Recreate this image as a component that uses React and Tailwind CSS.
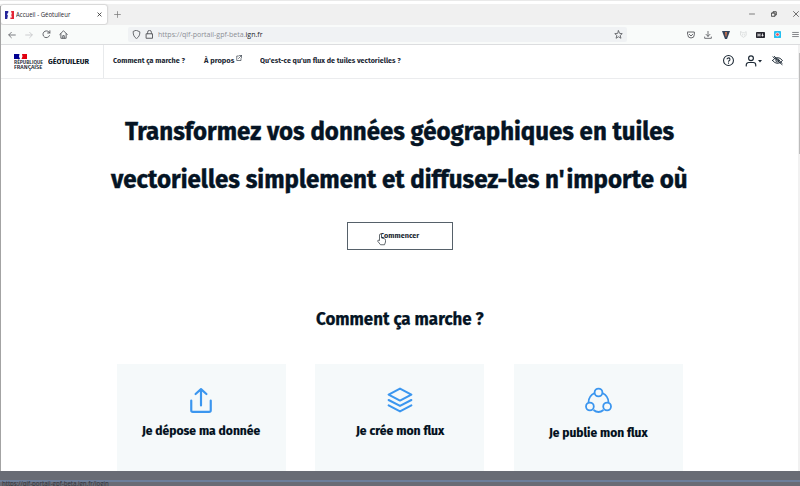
import { useLayoutEffect, useRef, useState } from 'react';

const FIRA = "font-['Fira_Sans','Noto_Sans',sans-serif]";

// Stretches one line of text to the width of its box.
function Fit({ className = '', children }) {
  const box = useRef(null);
  const text = useRef(null);
  const [scale, setScale] = useState(1);
  useLayoutEffect(() => {
    setScale(box.current.clientWidth / text.current.offsetWidth);
  }, []);
  return (
    <span ref={box} className={`block shrink-0 whitespace-nowrap ${className}`}>
      <span ref={text} className="inline-block origin-left" style={{ transform: `scaleX(${scale})` }}>
        {children}
      </span>
    </span>
  );
}

function Icon({ className = '', children, w = 2 }) {
  return (
    <svg
      viewBox="0 0 24 24"
      fill="none"
      stroke="currentColor"
      strokeWidth={w}
      strokeLinecap="round"
      strokeLinejoin="round"
      className={`block shrink-0 ${className}`}
    >
      {children}
    </svg>
  );
}

function TabStrip() {
  return (
    <div className="flex h-[21px] shrink-0 items-start bg-[#f0f0f0]">
      <div className="ml-px mt-px flex h-[19px] w-[106px] items-center rounded-xs bg-white pl-[4px] shadow-[0_0_2px_#9a9a9a]">
        <svg viewBox="0 0 9 8" className="block h-[8px] w-[9px]">
          <path d="M0 0h3.300v1.600L2 3.200l.9 1.400L2.200 8H0z" fill="#26269a" />
          <path d="M6 0h3v8H5.400V6.400H7L6.200 4l.6-1.200z" fill="#e32636" />
        </svg>
        <Fit className="ml-[2px] w-[54px] text-[7px] leading-[10px] text-[#25252b]">Accueil - Géotuileur</Fit>
        <Icon w={4} className="ml-[27px] size-[5px] text-[#333]">
          <path d="M4 4l16 16M20 4L4 20" />
        </Icon>
      </div>
      <Icon w={2.5} className="ml-[7px] mt-[7px] size-[7px] text-[#777]">
        <path d="M12 2v20M2 12h20" />
      </Icon>
      <Icon w={3} className="ml-auto mt-[7px] size-[6px] text-[#555]">
        <path d="M2 12h20" />
      </Icon>
      <Icon w={3.5} className="ml-[16px] mt-[7px] size-[6px] text-[#333]">
        <path d="M3 8h13v13H3zM8 8V3h13v13h-5" />
      </Icon>
      <Icon w={3} className="ml-[16px] mt-[7px] mr-[1px] size-[6px] text-[#444]">
        <path d="M2 2l20 20M22 2L2 22" />
      </Icon>
    </div>
  );
}

function Toolbar() {
  return (
    <div className="flex h-[19px] shrink-0 items-center bg-[#f9fbfa] text-[#5b5d62]">
      <Icon className="ml-[8px] size-[8px]" w={2.4}>
        <path d="M22 12H3M10 4l-8 8 8 8" />
      </Icon>
      <Icon className="ml-[9px] size-[8px] text-[#c2c3c5]" w={2.4}>
        <path d="M2 12h19M14 4l8 8-8 8" />
      </Icon>
      <Icon className="ml-[9px] size-[9px]" w={2.5}>
        <path d="M20 15a9 9 0 1 1-1.500-9.500L21 8M21 2v6h-6" />
      </Icon>
      <Icon className="ml-[8px] size-[9px]" w={2.5}>
        <path d="M2 12L12 2l10 10M5 10v12h14V10M10 22v-7h4v7" />
      </Icon>
      <div className="ml-[60px] flex h-[15px] w-[499px] items-center rounded-xs bg-[#f0f2f4]">
        <Icon className="ml-[4px] size-[9px]" w={2.4}>
          <path d="M12 1l9 4c0 9-3 14-9 18C6 19 3 14 3 5z" />
        </Icon>
        <Icon className="ml-[4px] size-[9px]" w={2.6}>
          <path d="M4 10h16v12H4zM7 10V6a5 5 0 0 1 10 0v4" />
        </Icon>
        <Fit className="ml-[4px] w-[105px] text-[7.500px] leading-[11px] text-[#8c8f94]">
          https://qlf-portail-gpf-beta.<span className="text-[#202028]">ign.fr</span>
        </Fit>
        <Icon className="ml-auto mr-[4px] size-[9px]" w={2.3}>
          <path d="M12 2l3 7 7 .7-5.500 4.800L18.500 22 12 18l-6.500 4 2-7.500L2 9.700 9 9z" />
        </Icon>
      </div>
      <Icon className="ml-[60px] size-[8px]" w={2.8}>
        <path d="M2 3h20v8a10 10 0 0 1-20 0zM7 10l5 5 5-5" />
      </Icon>
      <Icon className="ml-[9px] size-[8px]" w={2.6}>
        <path d="M12 1v15M6 10l6 6 6-6M2 18v4h20v-4" />
      </Icon>
      <svg viewBox="0 0 8 8" className="ml-[10px] block size-[8px]">
        <path d="M0 0h8L5 8H3z" fill="#35445b" />
        <path d="M3 1h2L4.500 5.500h-1z" fill="#d0754c" />
      </svg>
      <Icon className="ml-[10px] size-[7px] text-[#d9dbdc]" w={3}>
        <path d="M3 2l5 4h8l5-4v13l-9 7-9-7zM9 12v2M15 12v2" />
      </Icon>
      <svg viewBox="0 0 9 6" className="ml-[9px] block h-[6px] w-[9px]">
        <rect width="9" height="6" rx=".8" fill="#26262e" />
        <path d="M2 1.500v3M4 1.500v3M2 3h2M6.500 1.500v3M5.500 3.400h2" stroke="#fff" strokeWidth=".8" />
      </svg>
      <svg viewBox="0 0 8 8" className="ml-[9px] block size-[7px]">
        <rect width="8" height="8" rx="1" fill="#23bff0" />
        <circle cx="4" cy="4" r="2.400" fill="#f5f0f2" />
        <circle cx="4" cy="4" r="1.500" fill="#e9474e" />
      </svg>
      <Icon className="ml-[11px] size-[7px]" w={2.5}>
        <path d="M2 5h20M2 12h20M2 19h20" />
      </Icon>
    </div>
  );
}

function SiteHeader() {
  return (
    <header className={`flex h-[34px] shrink-0 border-b border-[#ebecee] bg-white font-bold text-[#1b2733] ${FIRA}`}>
      <div className="flex w-[104px] shrink-0 border-r border-[#e8eaec] pl-[14px]">
        <div className="mt-[9px] w-[30px]">
          <svg viewBox="0 0 13 5" className="block h-[5px] w-[13px]">
            <path d="M0 0h5.500L5 2.500 6 5H0z" fill="#000091" />
            <path d="M8 0h5v5H7.500L8.500 2.500z" fill="#e1000f" />
          </svg>
          <Fit className="mt-px w-[29px] text-[6px] font-medium leading-[5px]">RÉPUBLIQUE</Fit>
          <Fit className="w-[28px] text-[6px] font-medium leading-[5px]">FRANÇAISE</Fit>
        </div>
        <Fit className="ml-[4px] mt-[11px] w-[41px] text-[7.500px] leading-[11px] text-[#08121d]">GÉOTUILEUR</Fit>
      </div>
      <nav className="mt-[10px] flex flex-1 items-start text-[7.250px] leading-[11px]">
        <Fit className="ml-[9px] w-[72px]">Comment ça marche ?</Fit>
        <Fit className="ml-[19px] w-[30px]">À propos</Fit>
        <Icon className="ml-[2px] size-[6px]" w={2.400}>
          <path d="M10 4H3v18h17v-8M14 2h8v8M22 2L10 14" />
        </Icon>
        <Fit className="ml-[18px] w-[141px]">Qu'est-ce qu'un flux de tuiles vectorielles ?</Fit>
      </nav>
      <div className="mr-[17px] mt-[10px] flex">
        <svg viewBox="0 0 24 24" fill="none" stroke="currentColor" strokeWidth="2.300" className="block size-[11px]">
          <circle cx="12" cy="12" r="10.800" />
          <path d="M8.800 9.500a3.200 3.200 0 1 1 4.600 2.900c-1 .5-1.400 1-1.400 2.200M12 16.500v2.400" />
        </svg>
        <Icon className="ml-[11px] size-[12px]" w={2.300}>
          <circle cx="12" cy="6.500" r="4.800" />
          <path d="M2.500 22v-2a5 5 0 0 1 5-5h9a5 5 0 0 1 5 5v2" />
        </Icon>
        <svg viewBox="0 0 4 3" className="ml-px mt-[5px] block h-[3px] w-[4px]">
          <path d="M0 0h4L2 2.500z" fill="currentColor" />
        </svg>
        <Icon className="ml-[10px] size-[11px]" w={2}>
          <path d="M1 12q11-13 22 0-11 13-22 0zM2 4l20 17M5 3l17 15" />
          <circle cx="12" cy="12" r="3.500" />
        </Icon>
      </div>
    </header>
  );
}

function Card({ icon, title, width, low }) {
  return (
    <div className="flex h-[122px] w-[169px] flex-col items-center bg-[#f5f9fa]">
      <div className="mt-[23px] flex h-[27px] items-start text-[#3b96ef]">{icon}</div>
      <Fit
        className={`text-[13px] leading-[18px] text-[#000e1a] [-webkit-text-stroke:0.200px_currentColor] ${low ? 'mt-[10px]' : 'mt-[8px]'} ${width}`}
      >
        {title}
      </Fit>
    </div>
  );
}

export default function App() {
  return (
    <div className="relative flex h-[486px] w-[800px] flex-col overflow-hidden bg-white font-['Segoe_UI','Open_Sans',sans-serif]">
      <div className="h-[4px] shrink-0 border-t border-[#e9e9e9] bg-white" />
      <TabStrip />
      <Toolbar />
      <div className="h-px shrink-0 bg-[#dcdddf]" />
      <SiteHeader />
      <main className={`mr-[1px] flex flex-1 flex-col items-center font-bold text-[#051424] ${FIRA}`}>
        <h1 className="mt-[29px] flex flex-col items-center text-[25.500px] leading-[48px] [-webkit-text-stroke:0.400px_currentColor]">
          <Fit className="w-[549px]">Transformez vos données géographiques en tuiles</Fit>
          <Fit className="w-[577px]">
            vectorielles simplement et diffusez-les n<span className="mr-[2px]">'</span>importe où
          </Fit>
        </h1>
        <button className="relative mt-[18px] flex h-[28px] w-[106px] justify-center border border-[#56616a] pt-[7px] text-[7.500px] leading-[11px] text-[#1b2733]">
          <Fit className="w-[39px]">Commencer</Fit>
          <svg viewBox="0 0 18 24" className="absolute left-[29px] top-[10px] block h-[13px] w-[9px]">
            <path
              d="M5 14V3a2 2 0 0 1 4 0v6l6 1.500q2 .5 2 3V17l-2 5.500H7L1.500 15.500q-.5-2.500 2-2z"
              fill="#fff"
              stroke="#333b42"
              strokeWidth="1.500"
            />
          </svg>
        </button>
        <h2 className="mt-[57px] text-[17.500px] leading-[26px] [-webkit-text-stroke:0.250px_currentColor]">
          <Fit className="w-[168px]">Comment ça marche ?</Fit>
        </h2>
        <section className="mt-[31px] flex gap-[29.500px]">
          <Card
            title="Je dépose ma donnée"
            width="w-[118px]"
            icon={
              <Icon className="size-[26px]" w={2}>
                <path d="M12 17V2M7 6.500L12 2l5 4.500M3 12.500v9a1.500 1.500 0 0 0 1.500 1.500h15a1.500 1.500 0 0 0 1.500-1.500v-9" />
              </Icon>
            }
          />
          <Card
            title="Je crée mon flux"
            width="w-[88px]"
            icon={
              <Icon className="size-[26px]" w={1.900}>
                <path d="M12 1.500l10.500 5.500L12 12.500 1.500 7zM1.500 12L12 17.500 22.500 12M1.500 17L12 22.500 22.500 17" />
              </Icon>
            }
          />
          <Card
            low
            title="Je publie mon flux"
            width="w-[99px]"
            icon={
              <svg viewBox="0 0 27 27" fill="none" stroke="currentColor" strokeWidth="1.800" className="block size-[27px]">
                <circle cx="13.500" cy="5.500" r="3.900" />
                <circle cx="4.900" cy="19.500" r="3.900" />
                <circle cx="22.100" cy="19.500" r="3.900" />
                <path d="M9.700 6Q3.500 9 3.500 15.500M17.300 6q6.200 3 6.200 9.500M8.500 23q5 4 10 0" />
              </svg>
            }
          />
        </section>
      </main>
      <div className="absolute left-0 top-[6px] h-[465px] w-px bg-[#a3a3a3]" />
      <div className="absolute right-0 top-[45px] h-[426px] w-[2px] bg-[#f1f1f1]" />
      <div className="absolute right-0 top-[53px] h-[101px] w-px bg-[#bcbcbc]" />
      <div className="absolute bottom-0 left-0 h-[15px] w-full bg-[#696c75]">
        <div className="mt-[9px] h-[2px] bg-[#6d7f9b]" />
        <Fit className="ml-[2px] mt-[-3px] w-[107px] text-[6.500px] leading-[9px] text-[#30333b]">
          https://qlf-portail-gpf-beta.ign.fr/login
        </Fit>
      </div>
    </div>
  );
}
